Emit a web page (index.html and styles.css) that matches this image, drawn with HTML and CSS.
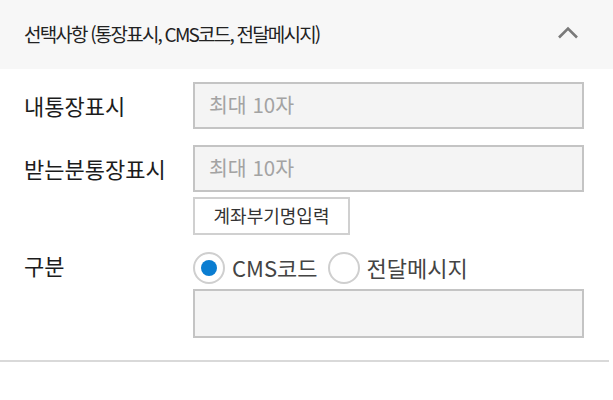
FILE: index.html
```html
<!DOCTYPE html>
<html lang="ko">
<head>
<meta charset="utf-8">
<link rel="stylesheet" href="styles.css">
</head>
<body>
<div class="panel">
  <div class="panel-head">
    <span class="title">선택사항 (통장표시, CMS코드, 전달메시지)</span>
    <svg class="chev" width="22" height="13" viewBox="0 0 22 13"><path d="M2 11.5 L11 2.5 L20 11.5" fill="none" stroke="#7a7a7a" stroke-width="2.6"/></svg>
  </div>
  <div class="form">
    <div class="label">내통장표시</div>
    <div class="field"><div class="input">최대 10자</div></div>

    <div class="label">받는분통장표시</div>
    <div class="field">
      <div class="input">최대 10자</div>
      <div class="btn">계좌부기명입력</div>
    </div>

    <div class="label label-top">구분</div>
    <div class="field">
      <div class="radios">
        <span class="radio on"></span><span class="rlabel">CMS코드</span>
        <span class="radio"></span><span class="rlabel">전달메시지</span>
      </div>
      <div class="input empty"></div>
    </div>
  </div>
  <div class="divider"></div>
</div>
</body>
</html>
```
FILE: styles.css
```css
html, body { margin: 0; padding: 0; background: #fff; }
body { font-family: "Noto Sans CJK KR", "Noto Sans", sans-serif; color: #222; }
.panel { width: 613px; }
.panel-head {
  height: 69px; background: #f7f7f7;
  display: flex; align-items: center; justify-content: space-between;
  padding: 0 34px 0 24px; box-sizing: border-box;
}
.title { font-size: 19px; letter-spacing: -1.8px; color: #222; margin-top: -3px; }
.chev { display: block; margin-top: -4px; }
.form {
  display: grid; grid-template-columns: 169px 391px;
  padding: 13px 0 0 24px; row-gap: 16px;
}
.label { font-size: 22px; color: #1c1c1c; align-self: start; height: 47px; line-height: 46px; white-space: nowrap; }
.label-top { height: 34px; line-height: 30px; margin-top: -1px; }
.field { display: flex; flex-direction: column; align-items: flex-start; }
.input {
  width: 391px; height: 47px; box-sizing: border-box;
  border: 2px solid #c4c4c4; background: #f4f4f4;
  font-size: 20.5px; color: #a3a3a3; padding-left: 14px; line-height: 41px;
}
.input.empty { height: 49px; margin-top: 4px; }
.btn {
  margin-top: 5px; width: 157px; height: 38px; box-sizing: border-box;
  border: 2px solid #d0d0d0; background: #fff;
  font-size: 18px; color: #333; text-align: center; line-height: 32px;
}
.radios { display: flex; align-items: center; height: 34px; }
.radio {
  width: 32px; height: 32px; box-sizing: border-box; border-radius: 50%;
  border: 2px solid #cfcfcf; background: #fff; position: relative;
}
.radio.on::after {
  content: ""; position: absolute; left: 6px; top: 6px;
  width: 16px; height: 16px; border-radius: 50%; background: #0a7dd1;
}
.rlabel { font-size: 22px; color: #444; margin: -2px 10px 0 7px; }
.divider { height: 2px; background: #d9d9d9; margin: 22px 4px 0 0; }
```
